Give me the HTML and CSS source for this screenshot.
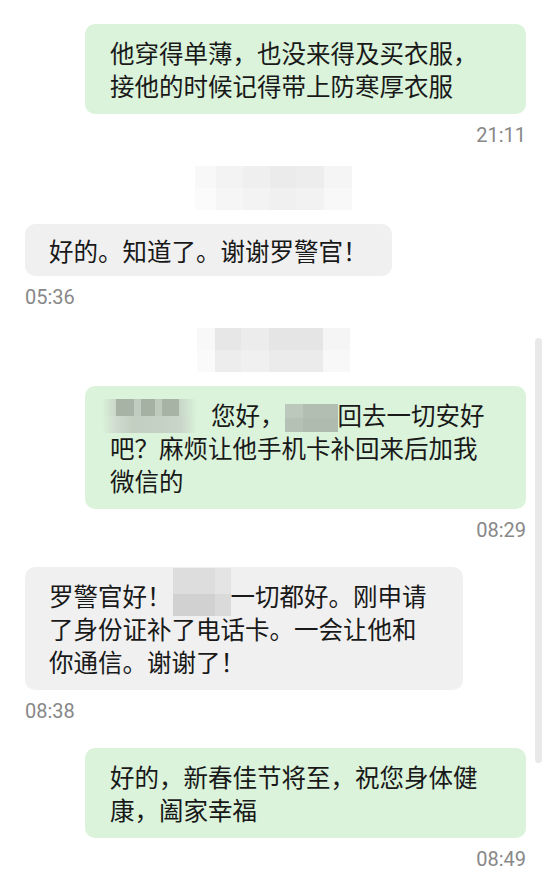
FILE: index.html
```html
<!DOCTYPE html>
<html lang="zh-CN">
<head>
<meta charset="utf-8">
<title>聊天记录</title>
<link rel="stylesheet" href="styles.css">
</head>
<body>
<div class="chat">
  <div class="msg out">
    <div class="bubble wide-out">他穿得单薄，也没来得及买衣服，<br>接他的时候记得带上防寒厚衣服</div>
    <div class="time">21:11</div>
  </div>

  <div class="sys sys-a"></div>

  <div class="msg in">
    <div class="bubble single">好的。知道了。谢谢罗警官！</div>
    <div class="time">05:36</div>
  </div>

  <div class="sys sys-b"></div>

  <div class="msg out">
    <div class="bubble wide-out"><span class="blur-name"></span>您好，<span class="mask mask-green"></span>回去一切安好<br>吧？麻烦让他手机卡补回来后加我<br>微信的</div>
    <div class="time">08:29</div>
  </div>

  <div class="msg in">
    <div class="bubble wide-in">罗警官好！<span class="mask mask-gray"></span>一切都好。刚申请<br>了身份证补了电话卡。一会让他和<br>你通信。谢谢了！</div>
    <div class="time">08:38</div>
  </div>

  <div class="msg out">
    <div class="bubble wide-out">好的，新春佳节将至，祝您身体健<br>康，阖家幸福</div>
    <div class="time">08:49</div>
  </div>
</div>
<div class="scrollbar"></div>
</body>
</html>
```

FILE: styles.css
```css
* { box-sizing: border-box; }

html, body {
  margin: 0;
  padding: 0;
  background: #ffffff;
}

body {
  width: 550px;
  height: 881px;
  overflow: hidden;
  position: relative;
  font-family: "Noto Sans CJK SC", "Noto Sans", sans-serif;
  color: #191919;
}

.chat {
  display: flex;
  flex-direction: column;
  padding: 24px 24px 0 25px;
}

.msg {
  display: flex;
  flex-direction: column;
}

.msg.out { align-items: flex-end; }
.msg.in { align-items: flex-start; }

.msg + .msg { margin-top: 25px; }

.bubble {
  font-size: 24.5px;
  line-height: 33px;
  padding: 12px 24px;
  border-radius: 10px;
  white-space: nowrap;
}

.out .bubble { background: #daf3da; }
.in .bubble { background: #f0f0f0; }

.bubble.single { padding: 9.5px 24px; }
.bubble.wide-out { width: 441px; padding-left: 25px; }
.bubble.wide-in { width: 438px; }

.time {
  margin-top: 9px;
  font-family: Roboto, "Liberation Sans", sans-serif;
  font-size: 20px;
  line-height: 24px;
  color: #888888;
}

/* blurred system time stamps */
.sys {
  align-self: flex-start;
  height: 44px;
  margin-top: 19px;
  margin-bottom: 14px;
}

.sys-a {
  width: 157px;
  margin-left: 170px;
  background:
    linear-gradient(90deg, #f8f8f8 0 21px, #f3f3f3 21px 48px, #efefef 48px 75px, #ebebeb 75px 101px, #ededed 101px 129px, #f5f5f5 129px) top / 100% 22px no-repeat,
    linear-gradient(90deg, #fbfbfb 0 21px, #f6f6f6 21px 48px, #f3f3f3 48px 75px, #f0f0f0 75px 101px, #f2f2f2 101px 129px, #f8f8f8 129px) bottom / 100% 22px no-repeat;
}

.sys-b {
  width: 153px;
  margin-left: 172px;
  background:
    linear-gradient(90deg, #f8f8f8 0 18px, #e7e7e7 18px 44px, #ececec 44px 72px, #e5e5e5 72px 126px, #f5f5f5 126px) top / 100% 22px no-repeat,
    linear-gradient(90deg, #fafafa 0 18px, #ededed 18px 44px, #f0f0f0 44px 72px, #ebebeb 72px 126px, #f8f8f8 126px) bottom / 100% 22px no-repeat;
}

/* mosaics inside bubbles */
.blur-name {
  display: inline-block;
  vertical-align: top;
  width: 95px;
  height: 34px;
  margin: 1px 14px -2px -8px;
  border-radius: 4px;
  background:
    linear-gradient(90deg, rgba(200,213,199,0) 0, #c9d6c8 14px, #a6b3a5 14px 32px, #c0ccbf 32px 39px, #a4b1a3 39px 53px, #bdcabc 53px 60px, #a6b3a5 60px 77px, #c7d4c6 77px, rgba(200,213,199,0) 95px) top / 100% 17px no-repeat,
    linear-gradient(90deg, rgba(205,218,204,0) 0, #cfdbce 14px, #c2cfc1 30px, #c5d1c4 60px, #cad6c9 80px, rgba(205,218,204,0) 95px) bottom / 100% 17px no-repeat;
}

.mask {
  display: inline-block;
  vertical-align: top;
}

.mask-green {
  width: 53px;
  height: 28px;
  margin: 6px 0 -1px 0;
  background:
    linear-gradient(90deg, #bcc8bb 0 18px, #b2beb1 18px) top / 100% 14px no-repeat,
    linear-gradient(90deg, #b5c1b4 0 18px, #afbbae 18px) bottom / 100% 14px no-repeat;
}

.mask-gray {
  width: 58px;
  height: 48px;
  margin: -11px 0 -4px 1px;
  background:
    linear-gradient(90deg, #dddddd 0 42px, #e4e4e4 42px) top / 100% 26px no-repeat,
    linear-gradient(90deg, #d1d1d1 0 42px, #dadada 42px) bottom / 100% 22px no-repeat;
}

.scrollbar {
  position: absolute;
  top: 338px;
  right: 8px;
  width: 7px;
  height: 425px;
  border-radius: 4px;
  background: #e9e9e9;
}
```
